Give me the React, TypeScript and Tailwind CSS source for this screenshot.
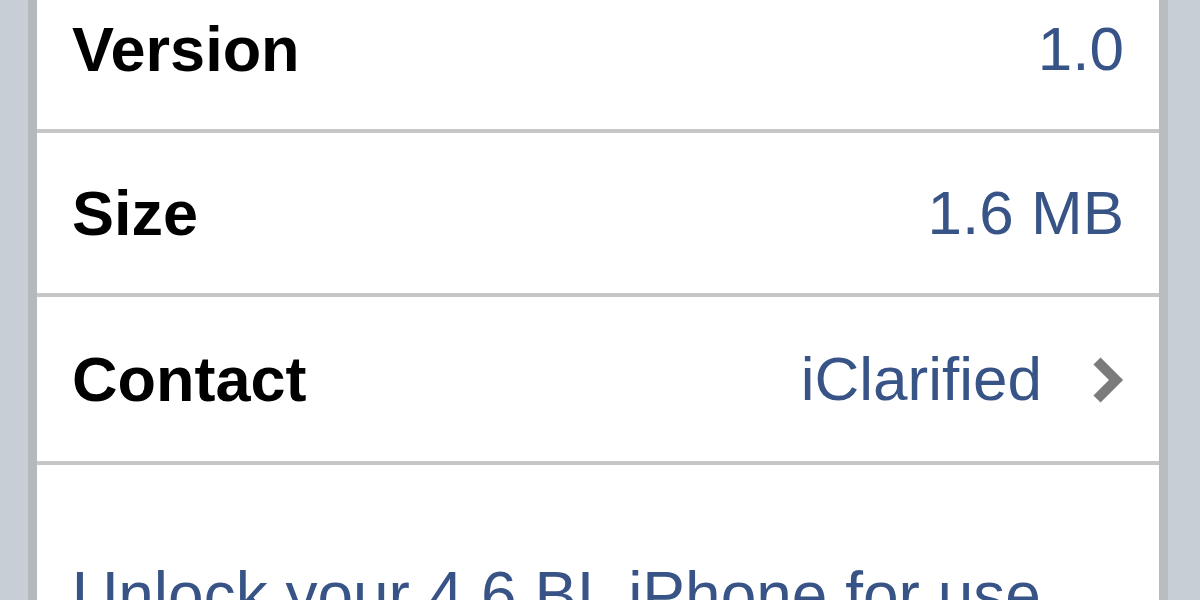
export default function App() {
  const rows = [
    { label: "Version", value: "1.0", h: "h-[164px]" },
    { label: "Size", value: "1.6 MB", h: "h-[164px]" },
    { label: "Contact", value: "iClarified", link: true, h: "h-[168px]" },
  ];

  return (
    <div className="h-[600px] w-[1200px] overflow-hidden bg-[#c7ced6] font-['Liberation_Sans',Arial,sans-serif]">
      <div className="ml-[28px] mr-[32px] -mt-[31px] border-x-[9px] border-l-[#b4b9be] border-r-[#b8bdc2] bg-white">
        {rows.map((row) => (
          <div
            key={row.label}
            className={`${row.h} flex items-center justify-between border-b-4 border-[#c6c6c6] pl-[35px] pr-[35px]`}
          >
            <span className="text-[63px] font-bold leading-none text-black">{row.label}</span>
            <span className="flex items-center gap-[48px] text-[62px] leading-none text-[#385487]">
              {row.value}
              {row.link && (
                <svg width="34" height="48" viewBox="0 0 34 48" className="mt-[2px]">
                  <path d="M7 5 L26 24 L7 43" fill="none" stroke="#7b7b7b" strokeWidth="10" />
                </svg>
              )}
            </span>
          </div>
        ))}
        <div className="pl-[35px] pr-[35px] pt-[98px] pb-[40px]">
          <p className="text-[64px] leading-none text-[#385487]">
            Unlock your 4.6 BL iPhone for use with any carrier
          </p>
        </div>
      </div>
    </div>
  );
}
